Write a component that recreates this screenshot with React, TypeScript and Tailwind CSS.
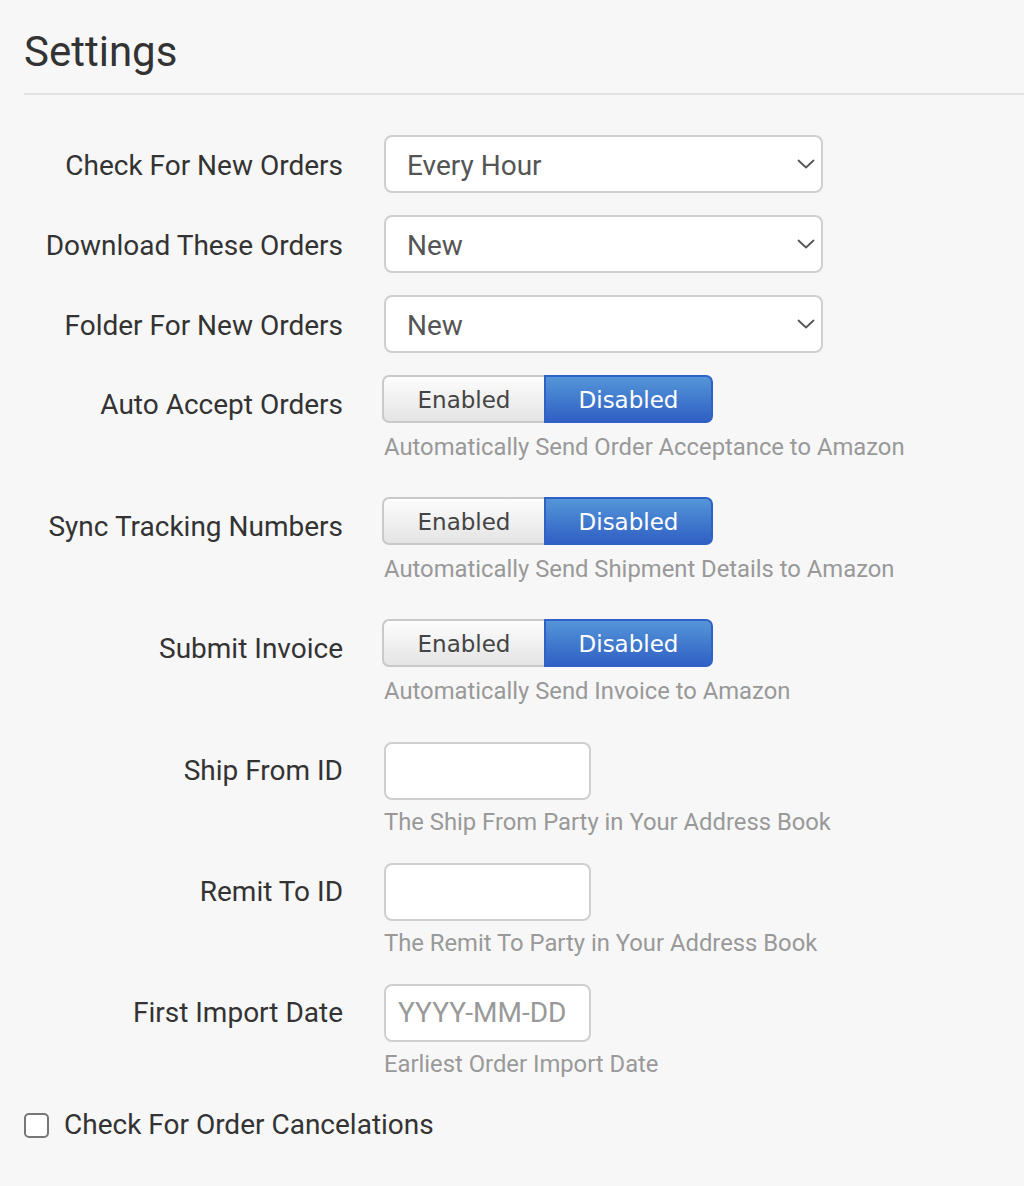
import React from "react";

const roboto = { fontFamily: "Roboto, 'Liberation Sans', sans-serif" };

function Label({ children, pt = "pt-[13px]" }: { children: React.ReactNode; pt?: string }) {
  return (
    <div className={`w-[343px] shrink-0 text-right text-[28px] leading-[32px] text-[#333] ${pt}`}>{children}</div>
  );
}

function Chevron() {
  return (
    <svg width="18" height="10" viewBox="0 0 18 10" fill="none" className="text-[#555]">
      <path d="M1.5 1.5 L9 8.5 L16.5 1.5" stroke="currentColor" strokeWidth="1.8" strokeLinecap="round" strokeLinejoin="round" />
    </svg>
  );
}

function SelectRow({ label, value }: { label: string; value: string }) {
  return (
    <div className="flex mb-[22px]">
      <Label pt="pt-[15px]">{label}</Label>
      <div className="ml-[41px] flex h-[58px] w-[439px] items-center justify-between rounded-[8px] border-2 border-[#cfcfcf] bg-white pl-[21px] pr-[6px]">
        <span className="pt-[3px] text-[28px] leading-[32px] text-[#555]">{value}</span>
        <Chevron />
      </div>
    </div>
  );
}

function ToggleRow({ label, help, last }: { label: string; help: string; last?: boolean }) {
  return (
    <div className={`flex ${last ? "mb-[37px]" : "mb-[36px]"}`}>
      <Label pt="pt-[14px]">{label}</Label>
      <div className="ml-[39px] flex flex-col">
        <div className="flex h-[48px] w-[331px]" style={{ fontFamily: "'DejaVu Sans', Verdana, sans-serif" }}>
          <div className="flex w-[162px] items-center justify-center rounded-l-[7px] border-2 border-r-0 border-[#c9c9c9] bg-gradient-to-b from-[#fdfdfd] to-[#e4e4e4] pt-[2px] text-[23px] text-[#444]">
            Enabled
          </div>
          <div className="flex flex-1 items-center justify-center rounded-r-[7px] border-2 border-[#2f61c6] bg-gradient-to-b from-[#5595d8] to-[#3160c4] pt-[2px] text-[23px] text-white">
            Disabled
          </div>
        </div>
        <div className="mt-[10px] ml-[2px] text-[23.8px] leading-[28px] text-[#999]">{help}</div>
      </div>
    </div>
  );
}

function InputRow({ label, help, placeholder, mb }: { label: string; help: string; placeholder?: string; mb: string }) {
  return (
    <div className={`flex ${mb}`}>
      <Label pt="pt-[13px]">{label}</Label>
      <div className="ml-[41px] flex flex-col">
        <div className="flex h-[58px] w-[207px] items-center rounded-[8px] border-2 border-[#cfcfcf] bg-white px-[12px]">
          {placeholder ? <span className="text-[28px] leading-[32px] text-[#999]">{placeholder}</span> : null}
        </div>
        <div className="mt-[8px] text-[23.8px] leading-[28px] text-[#999]">{help}</div>
      </div>
    </div>
  );
}

export default function App() {
  return (
    <div className="min-h-[1186px] w-[1024px] bg-[#f7f7f7] pl-[24px]" style={roboto}>
      <div className="pt-[28px] pb-[17px] text-[42px] leading-[48px] text-[#333]">Settings</div>
      <div className="h-[2px] bg-[#e3e3e3]" />
      <div className="pt-[40px] -ml-[24px]">
        <SelectRow label="Check For New Orders" value="Every Hour" />
        <SelectRow label="Download These Orders" value="New" />
        <SelectRow label="Folder For New Orders" value="New" />
        <ToggleRow label="Auto Accept Orders" help="Automatically Send Order Acceptance to Amazon" />
        <ToggleRow label="Sync Tracking Numbers" help="Automatically Send Shipment Details to Amazon" />
        <ToggleRow label="Submit Invoice" help="Automatically Send Invoice to Amazon" last />
        <InputRow label="Ship From ID" help="The Ship From Party in Your Address Book" mb="mb-[27px]" />
        <InputRow label="Remit To ID" help="The Remit To Party in Your Address Book" mb="mb-[27px]" />
        <InputRow label="First Import Date" help="Earliest Order Import Date" placeholder="YYYY-MM-DD" mb="mb-[31px]" />
      </div>
      <div className="flex items-center">
        <div className="h-[25px] w-[25px] rounded-[5px] border-2 border-[#777] bg-white" />
        <span className="ml-[15px] text-[28px] leading-[32px] text-[#333]">Check For Order Cancelations</span>
      </div>
    </div>
  );
}
